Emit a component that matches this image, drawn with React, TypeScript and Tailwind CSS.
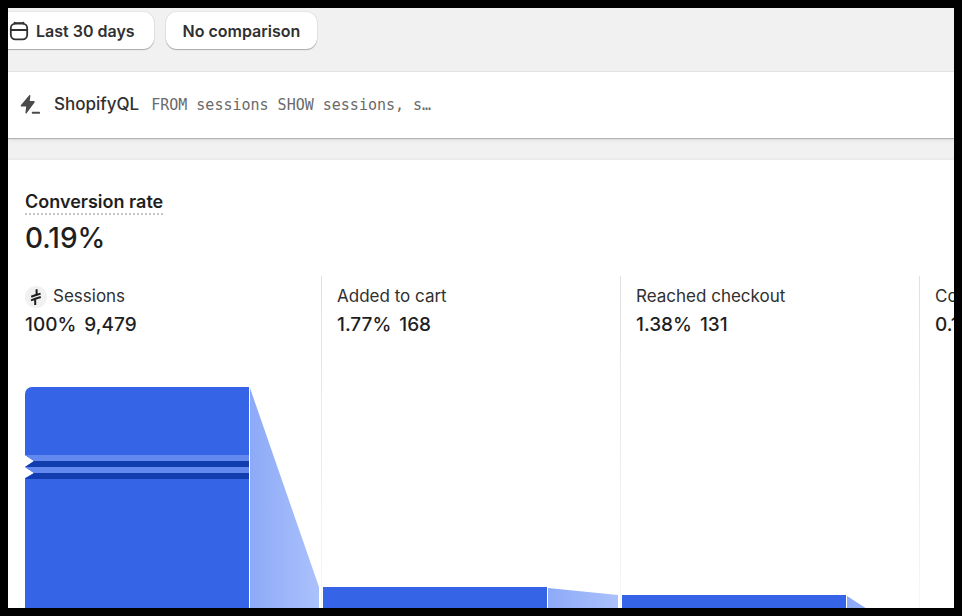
import React from 'react';

type Step = {
  label: string;
  rate: string;
  count: string;
  top: number;
  nextTop: number;
};

const CHART_HEIGHT = 300;

const steps: Step[] = [
  { label: 'Sessions', rate: '100%', count: '9,479', top: 26, nextTop: 226 },
  { label: 'Added to cart', rate: '1.77%', count: '168', top: 226, nextTop: 234 },
  { label: 'Reached checkout', rate: '1.38%', count: '131', top: 234, nextTop: 280 },
  { label: 'Completed checkout', rate: '0.19%', count: '18', top: 280, nextTop: 280 },
];

const CalendarIcon: React.FC = () => (
  <svg width="20" height="20" viewBox="0 0 20 20" fill="none" stroke="#303030" strokeWidth="1.8" strokeLinecap="round" aria-hidden="true">
    <rect x="1.8" y="2.6" width="16.4" height="15.8" rx="4.6" />
    <path d="M2 9h16M5.6 1.6v1M14.4 1.6v1M6 2.2h8" />
  </svg>
);

const QueryIcon: React.FC = () => (
  <svg width="22" height="22" viewBox="0 0 22 22" fill="#4a4a4a" aria-hidden="true">
    <path d="M9.2 1.2c.5-.6 1.3-.3 1.2.5L9.7 7.1h4.2c.8 0 1.1.9.6 1.5L6.6 19.3c-.5.6-1.3.3-1.2-.5l.8-6.3H1.7c-.9 0-1.3-.9-.7-1.6z" />
    <rect x="11.8" y="17.8" width="8.2" height="1.9" rx=".6" />
  </svg>
);

const SessionsIcon: React.FC = () => (
  <svg width="22" height="22" viewBox="0 0 22 22" fill="none" aria-hidden="true">
    <circle cx="11" cy="11" r="11" fill="#f1f1f1" />
    <path d="M11.6 3.2V8.8L6.2 10.8M15.6 7.6 11.2 9M10.2 19V12.8L15.8 11M6 14.4 10.4 12.8" stroke="#1f1f1f" strokeWidth="2" />
  </svg>
);

// Full height bar with a double tear across it, for values that are off the scale
const BrokenBar: React.FC<{ top: number }> = ({ top }) => (
  <g>
    <path
      d={`M2 ${top + 7}a7 7 0 0 1 7-7H226V${CHART_HEIGHT}H2V${top + 91}l9-5-9-6 9-6-9-6Z`}
      fill="#3564e6"
    />
    <path d={`M2 ${top + 68}H226v6H11Z`} fill="#6489ee" />
    <path d={`M11 ${top + 74}H226v6H2Z`} fill="#123dae" />
    <path d={`M2 ${top + 80}H226v6H11Z`} fill="#6489ee" />
    <path d={`M11 ${top + 86}H226v6H2Z`} fill="#123dae" />
  </g>
);

const StepChart: React.FC<{ step: Step; index: number }> = ({ step, index }) => {
  const fadeId = `flow-${index}`;
  const left = index === 0 ? 2 : 1;
  return (
    <svg className="block w-full" height={CHART_HEIGHT} aria-hidden="true">
      <defs>
        <linearGradient id={fadeId} x1="0" x2="1" y1="0" y2="0">
          <stop offset="0" stopColor="#8daaf7" />
          <stop offset="1" stopColor="#abc1fc" />
        </linearGradient>
      </defs>
      {index === 0 ? (
        <BrokenBar top={step.top} />
      ) : (
        <rect x={left} y={step.top} width="224" height={CHART_HEIGHT} fill="#3564e6" />
      )}
      <path d={`M${left + 225} ${step.top + 1}L296 ${step.nextTop}V${CHART_HEIGHT}H${left + 225}Z`} fill={`url(#${fadeId})`} />
    </svg>
  );
};

const FunnelStep: React.FC<{ step: Step; index: number }> = ({ step, index }) => (
  <li className="flex w-[299px] shrink-0">
    <div className="min-w-0 flex-1 pt-[9px]">
      <div className={index === 0 ? 'pl-0.5' : 'pl-[15px]'}>
        <div className="flex h-6 items-center gap-1.5 text-[17px] whitespace-nowrap text-[#303030]">
          {index === 0 && <SessionsIcon />}
          {step.label}
        </div>
        <div className="mt-1 flex gap-2 text-[19px] leading-6 font-medium whitespace-nowrap">
          <span>{step.rate}</span>
          <span>{step.count}</span>
        </div>
      </div>
      <div className="mt-6">
        <StepChart step={step} index={index} />
      </div>
    </div>
    <div className="w-px bg-linear-to-b from-[#e0e0e0] to-[#fafafa]" />
  </li>
);

export default function App() {
  return (
    <div className="flex h-screen flex-col overflow-hidden border-8 border-black bg-[#f1f1f1] font-['Inter','Liberation_Sans',sans-serif] text-[#1f1f1f]">
      {/* Date filters */}
      <div className="flex shrink-0 gap-3 border-b border-[#e3e3e3] pt-1 pb-[22px]">
        <button className="-ml-4 flex h-[37px] items-center gap-[7px] rounded-[11px] bg-white pr-[19px] pl-[17px] text-[16px] font-semibold text-[#303030] shadow-[0_1px_1px_#a8a8a8,0_0_0_1px_#e6e6e6]">
          <CalendarIcon />
          Last 30 days
        </button>
        <button className="h-[37px] rounded-[11px] bg-white px-[17px] text-[16px] font-semibold text-[#303030] shadow-[0_1px_1px_#a8a8a8,0_0_0_1px_#e6e6e6]">
          No comparison
        </button>
      </div>

      {/* Query bar */}
      <div className="flex h-[66px] shrink-0 items-center bg-white px-3 shadow-[0_1px_1px_#b5b5b5,0_2px_4px_#dedede]">
        <QueryIcon />
        <span className="ml-3 text-[17px] font-[450] text-[#303030]">ShopifyQL</span>
        <code className="ml-3 font-['DejaVu_Sans_Mono','Liberation_Mono',monospace] text-[15px] text-[#6a6a6a]">
          FROM sessions SHOW sessions, s…
        </code>
      </div>

      {/* Conversion funnel */}
      <main className="mt-5 min-h-0 flex-1 overflow-hidden border-t-2 border-[#ebebeb] bg-white pt-[31px]">
        <div className="px-[17px]">
          <h1 className="w-fit border-b-2 border-dotted border-[#c4c4c4] text-[18px] leading-[22px] font-semibold">Conversion rate</h1>
          <p className="text-[28px] leading-[46px] font-[550]">0.19%</p>
        </div>
        <ol className="mt-[15px] flex pl-[15px]">
          {steps.map((step, index) => (
            <FunnelStep key={step.label} step={step} index={index} />
          ))}
        </ol>
      </main>
    </div>
  );
}
